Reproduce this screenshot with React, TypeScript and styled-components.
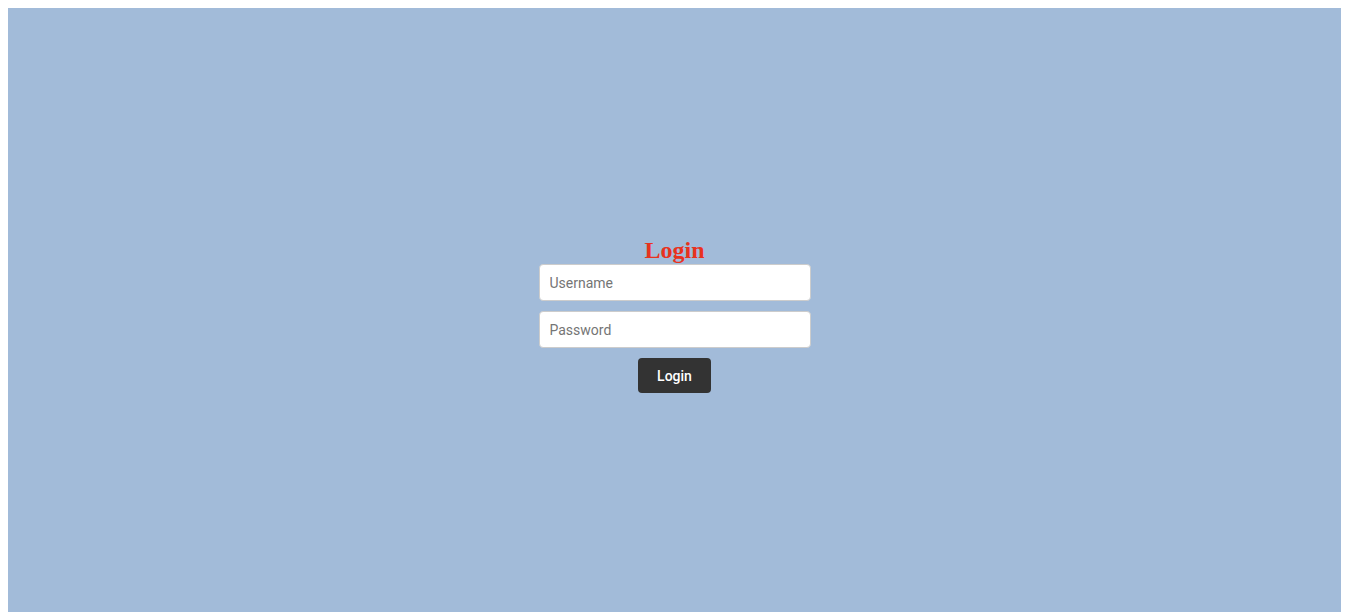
import React from "react";
import styled, { createGlobalStyle } from "styled-components";

const GlobalStyle = createGlobalStyle`
  body {
    margin: 8px 25px 8px 8px;
    font-family: "Liberation Serif", serif;
  }
`;

const Page = styled.div`
  height: 100vh;
  background: #a2bbd9;
  display: flex;
  flex-direction: column;
  align-items: center;
  justify-content: center;
  padding-top: 2px;
  box-sizing: border-box;
`;

const Title = styled.h2`
  margin: 0;
  font-family: "Liberation Serif", "Times New Roman", serif;
  font-size: 24px;
  font-weight: bold;
  color: #e8321e;
`;

const Form = styled.form`
  display: flex;
  flex-direction: column;
  align-items: center;
  gap: 10px;
`;

const Input = styled.input`
  box-sizing: border-box;
  width: 272px;
  height: 37px;
  padding: 0 10px;
  border: 1px solid #cccccc;
  border-radius: 4px;
  background: #ffffff;
  font-family: Roboto, "Liberation Sans", sans-serif;
  font-size: 14px;
  color: #333;
  outline: none;
  &::placeholder {
    color: #757575;
  }
`;

const Button = styled.button`
  box-sizing: border-box;
  width: 73px;
  height: 35px;
  padding: 0;
  border: none;
  border-radius: 4px;
  background: #333333;
  color: #ffffff;
  font-family: Roboto, "Liberation Sans", sans-serif;
  font-size: 14px;
  font-weight: 500;
  cursor: pointer;
`;

export default function App() {
  return (
    <>
      <GlobalStyle />
      <Page>
        <Title>Login</Title>
        <Form onSubmit={(e) => e.preventDefault()}>
          <Input type="text" placeholder="Username" />
          <Input type="password" placeholder="Password" />
          <Button type="submit">Login</Button>
        </Form>
      </Page>
    </>
  );
}
